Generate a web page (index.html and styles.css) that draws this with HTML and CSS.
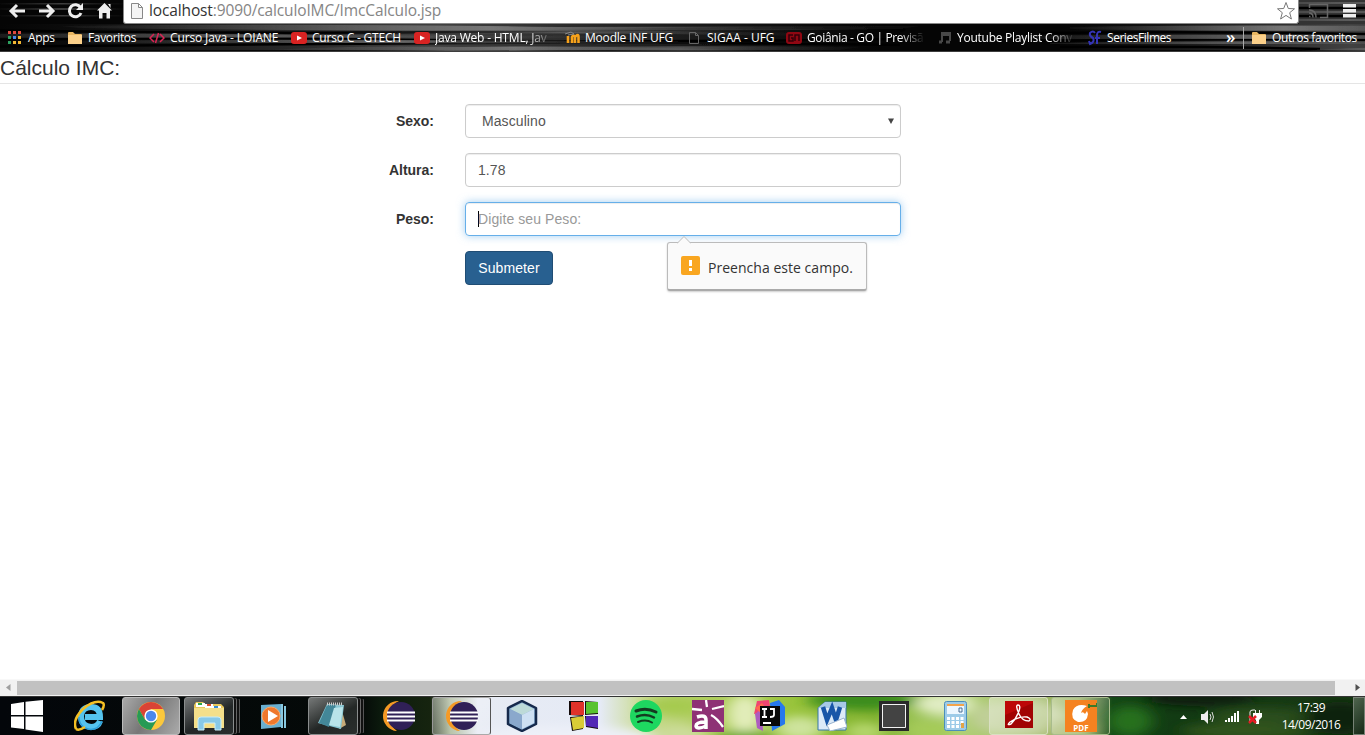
FILE: index.html
```html
<!DOCTYPE html>
<html lang="pt-BR">
<head>
<meta charset="utf-8">
<title>Cálculo IMC</title>
<link rel="stylesheet" href="styles.css">
</head>
<body>
<div class="screen">
<header class="browser">
  <svg class="browser-bg" width="1365" height="52" aria-hidden="true">
    <defs>
      <linearGradient id="wood"><stop offset="0" stop-color="#555" stop-opacity=".1"/><stop offset=".5" stop-color="#777"/><stop offset="1" stop-color="#444" stop-opacity=".1"/></linearGradient>
      <linearGradient id="haze"><stop offset="0" stop-color="#333" stop-opacity="0"/><stop offset=".5" stop-color="#484848" stop-opacity=".9"/><stop offset="1" stop-color="#333" stop-opacity="0"/></linearGradient>
      <filter id="soft1"><feGaussianBlur stdDeviation=".7"/></filter>
    </defs>
    <path d="M0 0h1365v52H0z" fill="#050505"/>
    <path d="M0 24H880V50H0z" fill="url(#haze)"/>
    <path d="M1060 24H1640V50H1060z" fill="url(#haze)"/>
    <path d="M1299 0H1365V24H1299z" fill="#333"/>
    <g filter="url(#soft1)">
      <path d="M0 30.500Q300 35 620 30T900 31M0 40Q200 37 420 40T900 39M0 46.500Q220 44 460 43T900 45M1040 33Q1200 31 1365 34M1040 41Q1200 38 1365 40M1060 47Q1200 46 1320 49M1299 8H1365M1299 16H1365" fill="none" stroke="#020202" stroke-width="2.500"/>
      <g fill="url(#wood)">
      <path d="M0 3h124v1.500H0zM0 8h124v2H0zM0 15h124v1.500H0z" opacity=".5"/>
      <path d="M60 26Q320 23 560 27L920 26L900 29Q500 33 80 28z"/>
      <path d="M-120 35Q100 32 300 35L620 36V38Q300 37-120 38z" opacity=".65"/>
      <path d="M80 41Q300 38 720 42V45Q350 42 80 43z" opacity=".75"/>
      <path d="M270 50Q350 45 460 47Q620 45 760 51L610 50L450 51z"/>
      <path d="M350 32Q550 28 800 33L800 36Q520 31 350 35z" opacity=".6"/>
      <path d="M500 48Q650 45 860 47L840 50Q620 51 500 50z" opacity=".6"/>
      <path d="M1070 27Q1230 24 1500 27V30Q1220 32 1070 29z"/>
      <path d="M1000 36Q1200 33 1500 37V39H1000zM1050 43Q1200 40 1500 42V44H1050z" opacity=".7"/>
      <path d="M1300 51Q1360 46 1500 47V50z"/>
      <path d="M1200 2H1500V4H1200zM1200 11H1500V13H1200zM1200 19H1500V21H1200z" opacity=".6"/>
      </g>
    </g>
    <path d="M0 51.500H1365" stroke="#555" opacity=".7"/>
  </svg>
  <div class="toolbar">
    <svg class="nav" width="123" height="24" fill="none" stroke="#eee" stroke-width="3">
      <path d="M11 11H25M17 5L11 11L17 17M39 11H53M47 5L53 11L47 17"/>
      <path d="M80.500 7.500A6 6 0 1 0 81 13"/><path d="M83 3V10H76z" fill="#eee" stroke="none"/>
      <path d="M104.500 3L112 10.500H110V18.500H106.500V13H102.500V18.500H99V10.500H97z M108 4H110.500V8z" fill="#eee" stroke="none"/>
    </svg>
    <div class="address">
      <svg class="doc" width="12" height="16" fill="#f4f4f4" stroke="#888"><path d="M.5.500H7.500L11.500 4.500V15.500H.5zM7.500.500V4.500H11.500"/></svg>
      <span class="url"><b>localhost</b>:9090/calculoIMC/ImcCalculo.jsp</span>
      <svg class="star" width="20" height="20" fill="none" stroke="#777" stroke-linejoin="round"><path d="M10 1.500L12.300 7.500L18.500 7.800L13.700 11.700L15.400 18L10 14.400L4.600 18L6.300 11.700L1.500 7.800L7.700 7.500z"/></svg>
    </div>
    <svg class="menu" width="66" height="24" fill="none">
      <path d="M10.500 8V4.500H28.500V17.500H21M10 16.500h1.500M10 13q4 0 4 4.500M10 10q7 0 7 7.500" stroke="#666" stroke-width="1.500"/>
      <path d="M44 4H57V7.500H44zM44 9H57V12.500H44zM44 14H57V17.500H44z" fill="#eee"/>
    </svg>
  </div>
  <nav class="bookmarks">
    <a class="bm bm-apps"><svg width="14" height="14"><path d="M0 0h3v3H0zM5 0h3v3H5zM10 0h3v3h-3z" fill="#e04a3f"/><path d="M0 5h3v3H0z" fill="#2da160"/><path d="M5 5h3v3H5z" fill="#4a86e8"/><path d="M10 5h3v3h-3zM5 10h3v3H5zM10 10h3v3h-3z" fill="#f2b632"/><path d="M0 10h3v3H0z" fill="#2da160"/></svg><span>Apps</span></a>
    <a class="bm bm-fav"><svg width="16" height="14"><use href="#folder"/></svg><span>Favoritos</span></a>
    <a class="bm bm-java"><svg width="16" height="14" fill="none" stroke="#dc2454" stroke-width="1.500"><path d="M5 3L1 7L5 11M11 3L15 7L11 11M9.500 2L6.500 12"/></svg><span>Curso Java - LOIANE</span></a>
    <a class="bm bm-c"><svg width="16" height="14"><use href="#yt"/></svg><span>Curso C - GTECH</span></a>
    <a class="bm bm-web"><svg width="16" height="14"><use href="#yt"/></svg><span class="fade">Java Web - HTML, Jav</span></a>
    <a class="bm bm-moodle"><svg width="16" height="14" fill="none"><path d="M3 12V5M7 12V6Q8.500 3 10 6V12M10 6Q13.500 2 13.500 6V12" stroke="#f7a21b" stroke-width="2.600"/><path d="M0 3L6 1L9 3L3 4" stroke="#888"/></svg><span>Moodle INF UFG</span></a>
    <a class="bm bm-sigaa"><svg width="11" height="14" fill="none" stroke="#666"><path d="M.5 1.500H6.500L9.500 4.500V12.500H.5zM6.500 1.500V4.500H9.500"/></svg><span>SIGAA - UFG</span></a>
    <a class="bm bm-goiania"><svg width="16" height="14"><rect y="1" width="16" height="12" rx="3" fill="#8f0712"/><path d="M7 4H3V10H7V7H5M9 10V4H13V10" stroke="#340008" stroke-width="1.500" fill="none"/></svg><span class="fade">Goiânia - GO | Previsã</span></a>
    <a class="bm bm-playlist"><svg width="14" height="14" fill="none" stroke="#484848" stroke-width="2"><path d="M4 11V2H12V10M4 4H12"/><path d="M1 11H4M8 11H12" stroke-width="3"/></svg><span class="fade">Youtube Playlist Conv</span></a>
    <a class="bm bm-series"><svg width="14" height="16" fill="none" stroke="#3434b6" stroke-width="2"><path d="M7 3Q5 0 2 3Q1 6 5 8Q7 12 2 14L1 11M13 2Q9 1 9 5V14M7 8H12"/></svg><span>SeriesFilmes</span></a>
    <span class="more">»</span>
    <a class="bm bm-other"><svg width="16" height="14"><use href="#folder"/></svg><span>Outros favoritos</span></a>
  </nav>
</header>

<main class="page">
  <h1>Cálculo IMC:</h1>
  <form class="form">
    <label>Sexo:</label><div class="control select"><span>Masculino</span><svg width="6" height="7"><path d="M0 .5H6L3 6z" fill="#444"/></svg></div>
    <label>Altura:</label><div class="control">1.78</div>
    <label>Peso:</label><div class="control focus"><i class="caret"></i><span>Digite seu Peso:</span>
      <div class="tip">
        <svg class="tip-arrow" width="14" height="8"><path d="M0 7.500L7 .5L14 7.500" fill="#fafafa" stroke="#bbb"/></svg>
        <svg width="19" height="19"><rect width="19" height="19" rx="2" fill="#f9a620"/><path d="M8 4h3v6H8zM8 12h3v3H8z" fill="#fff"/></svg>
        <span>Preencha este campo.</span>
      </div>
    </div>
    <div class="submit">Submeter</div>
  </form>
</main>

<div class="scrollbar">
  <svg width="17" height="15"><path d="M10.500 4V11L6 7.500z" fill="#a0a0a0"/></svg><div class="thumb"></div><svg width="30" height="15"><path d="M20.500 4V11L25 7.500z" fill="#505050"/></svg>
</div>

<footer class="taskbar">
  <svg class="task-bg" width="1365" height="39" aria-hidden="true">
    <defs>
      <linearGradient id="tb"><stop offset="0" stop-color="#03060a"/><stop offset=".265" stop-color="#050a08"/><stop offset=".28" stop-color="#0c1b0d"/><stop offset=".315" stop-color="#16240f"/><stop offset=".33" stop-color="#a5b391"/><stop offset=".35" stop-color="#e7ebf4"/><stop offset=".44" stop-color="#e5eaf5"/><stop offset=".47" stop-color="#cbdc96"/><stop offset=".51" stop-color="#b2ce63"/><stop offset=".58" stop-color="#9ac43c"/><stop offset=".64" stop-color="#7fb12d"/><stop offset=".7" stop-color="#b3d279"/><stop offset=".79" stop-color="#8fa951"/><stop offset=".815" stop-color="#144817"/><stop offset=".86" stop-color="#123b13"/><stop offset="1" stop-color="#193714"/></linearGradient>
      <filter id="blur" x="-50%" y="-80%" width="200%" height="260%"><feGaussianBlur stdDeviation="8 5"/></filter>
    </defs>
    <path d="M0 0h1365v39H0z" fill="url(#tb)"/>
    <g filter="url(#blur)">
      <ellipse cx="565" cy="42" rx="90" ry="12" fill="#edf0f8"/><ellipse cx="674" cy="10" rx="30" ry="10" fill="#a6ca50"/><ellipse cx="680" cy="40" rx="26" ry="12" fill="#ccdc9a"/>
      <ellipse cx="745" cy="18" rx="18" ry="20" fill="#e2edba"/><ellipse cx="745" cy="42" rx="30" ry="7" fill="#68a51f"/><ellipse cx="800" cy="32" rx="24" ry="12" fill="#cde39c"/>
      <ellipse cx="862" cy="4" rx="55" ry="10" fill="#3b8c1c"/><ellipse cx="865" cy="36" rx="20" ry="10" fill="#b4d56a"/><ellipse cx="945" cy="8" rx="30" ry="11" fill="#e0ecc3"/><ellipse cx="930" cy="34" rx="24" ry="10" fill="#a5cb59"/><ellipse cx="1020" cy="22" rx="50" ry="18" fill="#c0cf98"/>
      <ellipse cx="1070" cy="34" rx="24" ry="10" fill="#a9ba70"/><ellipse cx="1130" cy="25" rx="22" ry="15" fill="#286f1d"/><ellipse cx="1200" cy="2" rx="55" ry="8" fill="#081b0a"/><ellipse cx="1245" cy="35" rx="65" ry="8" fill="#32541f"/><ellipse cx="1260" cy="20" rx="50" ry="8" fill="#2b4d1c"/><ellipse cx="1340" cy="22" rx="35" ry="16" fill="#0b210c"/>
    </g>
    <path d="M0 .5H1365" stroke="#333"/>
  </svg>
  <div class="apps">
    <div class="task t-win"><svg width="32" height="32" fill="#fff"><path d="M0 4L13 2V15H0zM14.500 1.800L32 0V15H14.500zM0 16.500H13V29L0 27.500zM14.500 16.500H32V32L14.500 29.500z"/></svg></div>
    <div class="task t-ie"><svg width="32" height="32" fill="none"><path d="M26 21Q24 27 17 27Q7 26 7 16Q8 7 17 7Q26 7 26 17H11" stroke="#55c3ee" stroke-width="6"/><path d="M28 21Q25 29 17 29.500Q5 28 5 17" stroke="#2e9fd8" stroke-width="1.500"/><path d="M2 29Q-2 20 9 9Q21-1 29 3Q31 5 28 10M2 29Q5 31 11 27" stroke="#f4bf24" stroke-width="2.500"/></svg></div>
    <div class="task active t-chrome"><svg width="32" height="32"><circle cx="16" cy="16" r="14" fill="#fbc83c"/><path d="M3.900 9A14 14 0 0 1 28.100 9H16L9.900 19.500z" fill="#d94335"/><path d="M3.900 9A14 14 0 0 0 16 30L22.100 19.500L16 22L9.900 19.500z" fill="#279a55"/><circle cx="16" cy="16" r="6.600" fill="#fff"/><circle cx="16" cy="16" r="5.200" fill="#4a87ed"/></svg></div>
    <div class="task open dark stack t-explorer"><svg width="32" height="32"><path d="M1 5L3 2H10L12 4H28L31 7V28H1z" fill="#e8c75a"/><path d="M3 3h9v4H3zM12 4h8v4h-8zM20 6h8v4h-8z" fill="#fff"/><path d="M5 3h4v2H5z" fill="#2da647"/><path d="M14 4h4v2h-4z" fill="#dc4a28"/><path d="M21 6h4v2h-4z" fill="#378bd3"/><path d="M1 8H31V28H1z" fill="#f4df8a"/><path d="M5 30V20Q5 17 8 17H25Q28 17 28 20V30H22V23H11V30z" fill="#88c9e8" stroke="#c7edfa"/></svg></div>
    <div class="task t-wmp"><svg width="28" height="28"><path d="M2 3L22 2V25L2 27z" fill="#6aafd0"/><path d="M23 2V26M26 4V26" stroke="#88c8df" stroke-width="2"/><circle cx="12" cy="14" r="9" fill="#ef782d" stroke="#ffa762"/><path d="M9 8L19 14L9 20z" fill="#fff"/></svg></div>
    <div class="task open dark stack t-note"><svg width="32" height="32"><path d="M23 4L29 25L22 29z" fill="#c6aa78"/><path d="M10 4L27 5L24 29L1 23z" fill="#88c7d3"/><path d="M10 5L19 5L12 27L2 23z" fill="#438798"/><path d="M17 8L26 7L23 27L12 25z" fill="#b9e4e9"/><path d="M10 4H26" stroke="#ccc" stroke-width="3" stroke-dasharray="1 1"/></svg></div>
    <div class="task t-ecl"><svg width="34" height="32"><use href="#eclipse"/></svg></div>
    <div class="task open t-ecl2"><svg width="34" height="32"><use href="#eclipse"/></svg></div>
    <div class="task t-net"><svg width="32" height="32" stroke-linejoin="round"><path d="M16 1L30 8V24L16 31L2 24V8z" fill="#87acd0" stroke="#16294b" stroke-width="2.500"/><path d="M16 3L28 9L16 15L4 9z" fill="#bddad8"/><path d="M4 9L16 15V29L4 23z" fill="#8aa8cc"/><path d="M16 15L28 9V23L16 29z" fill="#cee0f3"/></svg></div>
    <div class="task t-vb"><svg width="32" height="32"><path d="M1 1L15 1V16L1 15zM17 1L30 2V14L17 15zM2 17L15 16V29L4 31zM17 16H30V29L18 27z" fill="#130b0b"/><path d="M3 2L16 2V15L3 15z" fill="#df322a"/><path d="M18 2L30 2V13L18 14z" fill="#58c22e"/><path d="M3 18L16 16V28L5 30z" fill="#d9cc37"/><path d="M18 16H30V28L18 26z" fill="#5127b5"/></svg></div>
    <div class="task t-spot"><svg width="32" height="32" fill="none" stroke="#143b20" stroke-linecap="round"><circle cx="16" cy="16" r="16" fill="#1ed760" stroke="none"/><path d="M6 11Q16 7 26 12" stroke-width="3"/><path d="M7 16.500Q16 13 24 17.500" stroke-width="2.500"/><path d="M8 22Q16 19 22 22.500" stroke-width="2"/></svg></div>
    <div class="task t-astah"><svg width="32" height="32" fill="none" stroke="#fff"><path d="M0 0H32V32H0z" fill="#8e3275" stroke="none"/><path d="M0 9L10 10M14 0L15 7M20 9L32 6M19 15Q25 18 31 27" stroke-width="2.300"/><path d="M5 17Q14 14 14 20V29M14 22Q4 22 4 26Q5 30 14 26" stroke-width="3.500"/></svg></div>
    <div class="task t-ij"><svg width="32" height="32"><path d="M3 1L15 0L17 12L0 14z" fill="#f14571"/><path d="M1 14L8 8L9 31L3 28z" fill="#ad5dbf"/><path d="M16 3L25 0L31 7V24L18 31z" fill="#2678ed"/><path d="M1 8L8 3L13 10L8 14z" fill="#fe6a4e"/><path d="M6 6H26V26H6z" fill="#080808"/><path d="M8 9H13M10.500 9V17M8 17H13M16 9H20V15Q20 17 16 17M9 23H17" stroke="#fff" stroke-width="1.800" fill="none"/></svg></div>
    <div class="task t-word"><svg width="30" height="30"><path d="M1 7L8 1H29V29H1z" fill="#dceaf8" stroke="#3977aa"/><path d="M1 7L8 1H29V7z" fill="#a7c9e6"/><path d="M6 6L10 19L15 7L19 19L23 6" stroke="#1956a8" stroke-width="4.500" fill="none"/><path d="M10 24L27 17L30 26L13 30z" fill="#fff" stroke="#9ab3cf"/></svg></div>
    <div class="task t-black"><svg width="30" height="30"><path d="M0 0H30V30H0z" fill="#292929"/><path d="M3.500 3.500H26.500V26.500H3.500z" fill="#434343" stroke="#f2f2f2"/></svg></div>
    <div class="task t-calc"><svg width="24" height="31"><rect x=".5" y=".5" width="22" height="29" rx="2" fill="#9dcbe8" stroke="#4b8eba"/><path d="M3 3H20V13H3z" fill="#edf7ff"/><path d="M3 3H20V5H3z" fill="#f4a44a"/><path d="M15 7H18V11H15z" fill="none" stroke="#4a6e93"/><path d="M3 17.500H20M3 21.500H20M3 25.500H20" stroke="#fff" stroke-width="3" stroke-dasharray="3 1.500"/><path d="M17 22H20V27H17z" fill="#e1a447"/></svg></div>
    <div class="task open t-adobe"><svg class="lift" width="28" height="28" fill="none"><path d="M0 0H28V27H0z" fill="#bd0707"/><path d="M0 14L28 2V27H0z" fill="#850000" opacity=".5"/><path d="M13 4Q10 4 14 13Q17 20 24 20Q27 18 22 16Q14 15 5 21Q1 25 6 23Q11 18 14 10Q16 4 13 4z" stroke="#fff" stroke-width="1.400"/></svg></div>
    <div class="task open t-foxit"><svg width="32" height="32"><path d="M0 0H32V32H0z" fill="#f58220"/><path d="M24 6H32V3M24 4V8" stroke="#3d7a28" stroke-width="2" fill="none"/><path d="M22 6Q17 9 16 13Q18 11 20 14Q18 18 14 16Q11 13 14 9Q17 6 22 6M22 6Q12 3 8 10Q5 19 13 22Q22 23 23 14L22 11L20 14Q18 18 14 16Q11 13 14 9Q17 6 22 6z" fill="#fff" fill-rule="evenodd"/><text x="16" y="30.500" text-anchor="middle" class="pdf">PDF</text></svg></div>
  </div>
  <div class="tray">
    <svg width="84" height="20" fill="none">
      <path d="M0 12L3.500 8L7 12z" fill="#fff"/>
      <path d="M21 7H24L28 3V17L24 13H21z" fill="#eee"/><path d="M30 7Q32 10 30 13M32 5Q35 10 32 15" stroke="#ddd"/>
      <path d="M45 13h2v2h-2zM48 11h2v4h-2zM51 9h2v6h-2zM54 6h2v9h-2zM57 4h2v11h-2z" fill="#fff"/>
      <path d="M70 15V5Q70 3 73 3H75M75.500 3V7M79.500 3V7" stroke="#eee"/><path d="M73 6H82V10L79 13V17H76V13L73 10z" fill="#fff"/><path d="M69 9L76 16M76 9L69 16" stroke="#e51b22" stroke-width="2.500"/>
    </svg>
    <div class="clock"><span class="time">17:39</span><span class="date">14/09/2016</span></div>
    <div class="show-desktop"></div>
  </div>
</footer>
</div>
<svg class="symbols" width="0" height="0" aria-hidden="true">
  <symbol id="folder" viewBox="0 0 16 14"><path d="M1 2Q1 1 2 1H6L8 3H14Q15 3 15 4V13H1z" fill="#e8b662"/><path d="M1 4H15V13H1z" fill="#fbd08a"/></symbol>
  <symbol id="yt" viewBox="0 0 16 14"><rect y="1" width="16" height="12" rx="3" fill="#d92322"/><path d="M6 4.500L11 7L6 9.500z" fill="#fff"/></symbol>
  <symbol id="eclipse" viewBox="0 0 34 32"><path d="M17 1A15 15 0 0 0 15 31Q7 25 7 16Q7 5 17 1" fill="#f59a25"/><circle cx="19" cy="16" r="14" fill="#302057"/><path d="M5 12.500H33M5 16.500H33M5 20.500H33" stroke="#fff" stroke-width="2.200"/></symbol>
</svg>
</body>
</html>
```
FILE: styles.css
```css
* { box-sizing: border-box; }
body { margin: 0; background: #fff; }
svg { display: block; flex: none; }
.symbols { position: absolute; }
.screen { width: 1365px; height: 735px; overflow: hidden; display: flex; flex-direction: column; }

.browser { position: relative; height: 52px; flex: none; font-family: "Open Sans", "Noto Sans", sans-serif; }
.browser-bg, .task-bg { position: absolute; inset: 0; }
.toolbar { position: relative; display: flex; height: 24px; }
.address { width: 1176px; height: 24px; padding-left: 7px; padding-bottom: 2px; display: flex; align-items: center; background: #fff; border: 1px solid #888; border-top: 0; border-radius: 0 0 3px 3px; }
.url { margin: -1px 0 0 6px; font-size: 15.5px; line-height: 20px; letter-spacing: -.13px; color: #858585; white-space: nowrap; }
.url b { font-weight: 400; color: #333; }
.star { margin-left: auto; margin-right: 2px; }
.bookmarks { position: relative; display: flex; align-items: center; height: 28px; padding-left: 8px; color: #fff; font-size: 12px; line-height: 18px; letter-spacing: -.25px; }
.bm { display: flex; align-items: center; gap: 5px; flex: none; white-space: nowrap; }
.bm-apps { width: 59px; gap: 6px; letter-spacing: -.3px; }
.bm-fav { width: 82px; letter-spacing: -.35px; }
.bm-java { width: 142px; letter-spacing: -.13px; }
.bm-c { width: 123px; letter-spacing: -.2px; }
.bm-web { width: 151px; letter-spacing: -.2px; }
.bm-moodle { width: 124px; gap: 4px; letter-spacing: -.2px; }
.bm-sigaa { width: 97px; gap: 7px; letter-spacing: 0; }
.bm-goiania { width: 152px; letter-spacing: -.35px; }
.bm-playlist { width: 150px; }
.bm-series { width: 138px; letter-spacing: -.45px; }
.fade { width: 122px; -webkit-mask-image: linear-gradient(90deg, #000 92px, transparent 118px); mask-image: linear-gradient(90deg, #000 92px, transparent 118px); }
.more { width: 17px; font-size: 17px; font-weight: 600; margin-top: -3px; }
.bm-other { height: 22px; padding-left: 7px; border-left: 1px solid #aaa; letter-spacing: -.38px; }

.page { flex: 1; font-family: "Liberation Sans", Arial, sans-serif; font-size: 14px; line-height: 20px; color: #333; }
h1 { margin: 0 0 20px; height: 32px; border-bottom: 1px solid #e5e5e5; font-size: 21px; line-height: 31px; font-weight: 400; }
.form { display: grid; grid-template-columns: 435px 436px; column-gap: 30px; row-gap: 15px; }
.form label { text-align: right; font-weight: 700; padding: 7px 1px 0 0; }
.control { position: relative; height: 34px; padding: 6px 12px; border: 1px solid #ccc; border-radius: 4px; color: #555; letter-spacing: .08px; box-shadow: inset 0 1px 1px rgba(0,0,0,.075); }
.select { display: flex; justify-content: space-between; align-items: center; padding: 0 6px 0 16px; }
.focus { border-color: #66afe9; box-shadow: inset 0 1px 1px rgba(0,0,0,.075), 0 0 8px rgba(102,175,233,.6); color: #999; display: flex; }
.caret { width: 1px; height: 16px; margin: 2px -1px 0 0; background: #000; }
.submit { grid-column: 2; width: 88px; height: 34px; border: 1px solid #204d74; border-radius: 4px; background: #286090; color: #fff; text-align: center; line-height: 32px; letter-spacing: .1px; }
.tip { position: absolute; left: 201px; top: 39px; width: 200px; height: 49px; padding: 0 0 2px 13px; display: flex; align-items: center; gap: 8px; background: #fafafa; border: 1px solid #bbb; border-bottom: 2px solid #aaa; border-radius: 3px; box-shadow: 0 1px 2px rgba(0,0,0,.2); color: #333; font-family: "Open Sans", "Noto Sans", sans-serif; font-size: 14px; letter-spacing: .03px; white-space: nowrap; }
.tip span { padding-top: 5px; }
.tip-arrow { position: absolute; left: 9px; top: -7px; }

.scrollbar { height: 17px; flex: none; display: flex; background: #f1f1f1; border-top: 1px solid #f8f8f8; padding-bottom: 2px; }
.thumb { width: 1318px; height: 14px; background: #c1c1c1; margin-top: 1px; }

.taskbar { position: relative; height: 39px; flex: none; display: flex; justify-content: space-between; }
.apps { position: relative; display: flex; }
.task { width: 62px; height: 38px; margin-top: 1px; display: flex; align-items: center; justify-content: center; }
.t-win { width: 54px; margin-right: 4px; }
.t-ie { width: 64px; }
.active { width: 58px; margin-right: 4px; border: 1px solid #bbb; border-radius: 3px; background: linear-gradient(120deg, #aaa, #777 45%, #aaa); }
.open { border: 1px solid #8a8d8d; border-radius: 3px; background: linear-gradient(135deg, rgba(255,255,255,.4), rgba(255,255,255,.08)); }
.dark { background: linear-gradient(150deg, rgba(255,255,255,.45), rgba(255,255,255,.12) 55%, rgba(255,255,255,.15)); }
.stack { box-shadow: 3px 0 0 -1px #111, 4px 0 0 -1px #666, 7px 0 0 -2px #111, 8px 0 0 -2px #555; }
.t-explorer { width: 50px; margin-right: 8px; }
.t-note { width: 50px; margin: 1px 10px 0 4px; }
.t-ecl2 { width: 59px; border-color: #aaa #555 #aaa #999; margin-left: 2px; }
.t-net { width: 62px; }
.t-black { width: 63px; }
.t-word { width: 61px; }
.t-adobe { width: 59px; margin-left: 2px; margin-right: 3px; border-color: #d9dfc2; }
.t-foxit { width: 59px; border-color: #a8bc8c; }
.lift { margin-bottom: 3px; }
.pdf { font: 700 8px "Open Sans", sans-serif; fill: #fff; }
.tray { position: relative; display: flex; align-items: center; color: #fff; font-family: "Open Sans", "Noto Sans", sans-serif; font-size: 12px; letter-spacing: -.5px; }
.tray > svg { margin-top: 2px; }
.clock { width: 90px; display: flex; flex-direction: column; align-items: center; line-height: 17px; margin: 1px 0 0 2px; }
.show-desktop { width: 12px; height: 38px; margin-left: -3px; border: 1px solid #778275; background: linear-gradient(135deg, #4f644e, #162a17); }
```
